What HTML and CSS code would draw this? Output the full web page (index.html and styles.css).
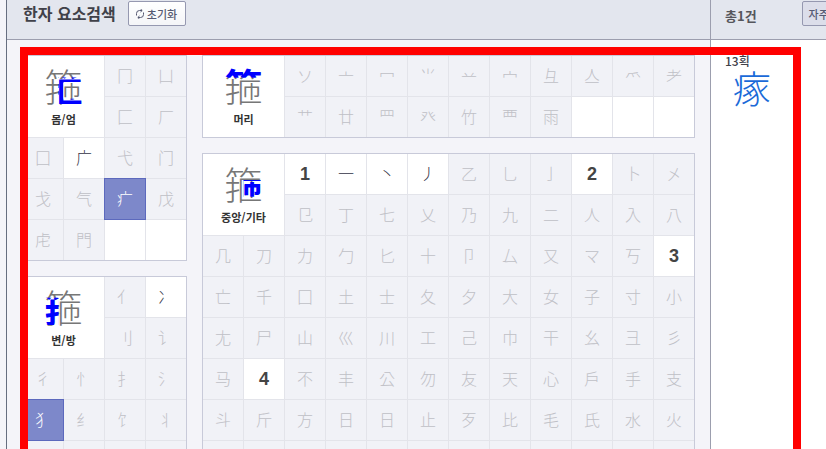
FILE: index.html
```html
<!DOCTYPE html>
<html lang="ko">
<head>
    <meta charset="UTF-8">
    <meta name="viewport" content="width=device-width, initial-scale=1.0">
    <title>한자 요소검색</title>
    <link rel="stylesheet" href="styles.css">
</head>
<body>

    <div class="app">
        <main class="search">
            <header class="bar">
                <h1>한자 요소검색</h1>
                <button class="btn" type="button">
                    <svg class="icon" viewBox="0 0 10 10" width="10" height="10" fill="none" stroke="currentColor">
                        <path d="M1.5 6.5V4.5A3 3 0 0 1 4.5 1.5H7M8.5 3.5V5.5A3 3 0 0 1 5.5 8.5H3"/>
                        <path d="M5.5 0L7.2 1.5L5.5 3M4.5 7L2.8 8.5L4.5 10"/>
                    </svg>
                    초기화
                </button>
            </header>

            <div class="boards">
                <div class="column">
                    <section class="grid narrow">
                        <div class="part"><span class="sample outer" data-char="箍">箍</span><strong>몸/엄</strong></div>
                        <button class="cell">冂</button>
                        <button class="cell">凵</button>
                        <button class="cell">匚</button>
                        <button class="cell">厂</button>
                        <button class="cell">囗</button>
                        <button class="cell on">广</button>
                        <button class="cell">弋</button>
                        <button class="cell">门</button>
                        <button class="cell">戈</button>
                        <button class="cell">气</button>
                        <button class="cell picked">疒</button>
                        <button class="cell">戊</button>
                        <button class="cell">虍</button>
                        <button class="cell">門</button>
                        <div class="blank"></div>
                        <div class="blank"></div>
                    </section>

                    <section class="grid narrow">
                        <div class="part"><span class="sample side" data-char="箍">箍</span><strong>변/방</strong></div>
                        <button class="cell">亻</button>
                        <button class="cell on">冫</button>
                        <button class="cell">刂</button>
                        <button class="cell">讠</button>
                        <button class="cell">彳</button>
                        <button class="cell">忄</button>
                        <button class="cell">扌</button>
                        <button class="cell">氵</button>
                        <button class="cell picked">犭</button>
                        <button class="cell">纟</button>
                        <button class="cell">饣</button>
                        <button class="cell">丬</button>
                        <div class="cell"></div>
                        <div class="cell"></div>
                        <div class="cell"></div>
                        <div class="cell"></div>
                    </section>
                </div>

                <div class="column">
                    <section class="grid wide">
                        <div class="part"><span class="sample top" data-char="箍">箍</span><strong>머리</strong></div>
                        <button class="cell">ソ</button>
                        <button class="cell">亠</button>
                        <button class="cell">冖</button>
                        <button class="cell">⺌</button>
                        <button class="cell">䒑</button>
                        <button class="cell">宀</button>
                        <button class="cell">彑</button>
                        <button class="cell">亼</button>
                        <button class="cell">爫</button>
                        <button class="cell">耂</button>
                        <button class="cell">⺾</button>
                        <button class="cell">廿</button>
                        <button class="cell">罒</button>
                        <button class="cell">癶</button>
                        <button class="cell">竹</button>
                        <button class="cell">覀</button>
                        <button class="cell">雨</button>
                        <div class="blank"></div>
                        <div class="blank"></div>
                        <div class="blank"></div>
                    </section>

                    <section class="grid wide">
                        <div class="part"><span class="sample center" data-char="箍">箍</span><strong>중앙/기타</strong></div>
                        <div class="count">1</div>
                        <button class="cell on">一</button>
                        <button class="cell on">丶</button>
                        <button class="cell on">丿</button>
                        <button class="cell">乙</button>
                        <button class="cell">乚</button>
                        <button class="cell">亅</button>
                        <div class="count">2</div>
                        <button class="cell">卜</button>
                        <button class="cell">㐅</button>

                        <button class="cell">㔾</button>
                        <button class="cell">丁</button>
                        <button class="cell">七</button>
                        <button class="cell">乂</button>
                        <button class="cell">乃</button>
                        <button class="cell">九</button>
                        <button class="cell">二</button>
                        <button class="cell">人</button>
                        <button class="cell">入</button>
                        <button class="cell">八</button>

                        <button class="cell">几</button>
                        <button class="cell">刀</button>
                        <button class="cell">力</button>
                        <button class="cell">勹</button>
                        <button class="cell">匕</button>
                        <button class="cell">十</button>
                        <button class="cell">卩</button>
                        <button class="cell">厶</button>
                        <button class="cell">又</button>
                        <button class="cell">マ</button>
                        <button class="cell">丂</button>
                        <div class="count">3</div>

                        <button class="cell">亡</button>
                        <button class="cell">千</button>
                        <button class="cell">囗</button>
                        <button class="cell">土</button>
                        <button class="cell">士</button>
                        <button class="cell">夂</button>
                        <button class="cell">夕</button>
                        <button class="cell">大</button>
                        <button class="cell">女</button>
                        <button class="cell">子</button>
                        <button class="cell">寸</button>
                        <button class="cell">小</button>

                        <button class="cell">尢</button>
                        <button class="cell">尸</button>
                        <button class="cell">山</button>
                        <button class="cell">巛</button>
                        <button class="cell">川</button>
                        <button class="cell">工</button>
                        <button class="cell">己</button>
                        <button class="cell">巾</button>
                        <button class="cell">干</button>
                        <button class="cell">幺</button>
                        <button class="cell">彐</button>
                        <button class="cell">彡</button>

                        <button class="cell">马</button>
                        <div class="count">4</div>
                        <button class="cell">不</button>
                        <button class="cell">丰</button>
                        <button class="cell">公</button>
                        <button class="cell">勿</button>
                        <button class="cell">友</button>
                        <button class="cell">天</button>
                        <button class="cell">心</button>
                        <button class="cell">戶</button>
                        <button class="cell">手</button>
                        <button class="cell">支</button>

                        <button class="cell">斗</button>
                        <button class="cell">斤</button>
                        <button class="cell">方</button>
                        <button class="cell">日</button>
                        <button class="cell">日</button>
                        <button class="cell">止</button>
                        <button class="cell">歹</button>
                        <button class="cell">比</button>
                        <button class="cell">毛</button>
                        <button class="cell">氏</button>
                        <button class="cell">水</button>
                        <button class="cell">火</button>

                        <div class="cell"></div>
                        <div class="cell"></div>
                        <div class="cell"></div>
                        <div class="cell"></div>
                        <div class="cell"></div>
                        <div class="cell"></div>
                        <div class="cell"></div>
                        <div class="cell"></div>
                        <div class="cell"></div>
                        <div class="cell"></div>
                        <div class="cell"></div>
                        <div class="cell"></div>
                    </section>
                </div>
            </div>
        </main>

        <aside class="results">
            <header class="bar">
                <h2>총1건</h2>
                <button class="btn often" type="button">자주</button>
            </header>
            <div class="result-list">
                <h3>13획</h3>
                <a class="hanja" href="#">瘃</a>
            </div>
        </aside>

        <div class="marker"></div>
    </div>

</body>
</html>
```

FILE: styles.css
```css
* {
    box-sizing: border-box;
}

body {
    margin: 0;
    background: #f4f4f9;
    color: #404149;
    font-family: "Noto Sans CJK KR", sans-serif;
    overflow: hidden;
}

.app {
    position: relative;
    display: flex;
    height: 100vh;
    margin-left: 6px;
    border-left: 1px solid #666e80;
    overflow: hidden;
}

.search {
    flex: none;
    border-right: 1px solid #9c9eae;
}

.results {
    flex: 1;
    min-width: 0;
    background: #fff;
    overflow: hidden;
}

.bar {
    display: flex;
    align-items: flex-start;
    height: 40px;
    padding: 1px 16px;
    background: #e3e6ee;
    border-bottom: 1px solid #9c9eae;
}

h1, h2, h3 {
    margin: 0;
    white-space: nowrap;
}

h1 {
    font-size: 16px;
    font-weight: 700;
    line-height: 25px;
    margin-right: 12px;
}

h2 {
    font-size: 13px;
    font-weight: 700;
    line-height: 30px;
    color: #55565c;
}

.btn {
    display: flex;
    align-items: center;
    gap: 2px;
    height: 25px;
    padding: 0 8px 0 6px;
    border: 1px solid #9598b0;
    border-radius: 2px;
    background: linear-gradient(#fff, #f4f5f8);
    color: #565972;
    font-family: inherit;
    font-size: 11px;
    font-weight: 500;
    line-height: 16px;
    white-space: nowrap;
    cursor: pointer;
}

.often {
    flex: none;
    margin-left: 45px;
    background: #dcdeea;
}

.results .bar {
    padding-left: 14px;
}

.boards {
    display: flex;
    gap: 15px;
    padding: 15px;
}

.column {
    display: flex;
    flex-direction: column;
    gap: 15px;
}

.grid {
    display: grid;
    grid-auto-rows: 40px;
    gap: 1px;
    background: #e3e4ea;
    border: 1px solid #c8cad9;
}

.narrow {
    grid-template-columns: repeat(4, 40px);
}

.wide {
    grid-template-columns: repeat(12, 40px);
}

.part {
    grid-column: span 2;
    grid-row: span 2;
    display: flex;
    flex-direction: column;
    align-items: center;
    padding-top: 10px;
    background: #fff;
}

.part strong {
    font-size: 11px;
    line-height: 18px;
    margin-top: 6px;
    color: #333;
}

.sample {
    position: relative;
    font-family: "Noto Sans CJK JP", sans-serif;
    font-size: 38px;
    font-weight: 300;
    line-height: 38px;
    color: #777;
}

/* the highlighted part is the same character, bold and cut to its region */
.sample::after {
    content: attr(data-char);
    position: absolute;
    top: 0;
    left: 0;
    color: #00f;
    font-weight: 700;
}

.outer::after {
    clip-path: polygon(36% 30%, 100% 30%, 100% 42%, 50% 42%, 50% 86%, 100% 86%, 100% 100%, 36% 100%);
}

.side::after {
    clip-path: inset(28% 62% 0 0);
}

.top::after {
    clip-path: inset(0 0 69% 0);
}

.center::after {
    clip-path: inset(42% 4% 14% 50%);
}

.cell {
    display: flex;
    align-items: center;
    justify-content: center;
    padding: 0 0 2px;
    border: 0;
    background: #f1f2f7;
    color: #bfc0c6;
    font-family: "Noto Sans CJK JP", "Noto Sans CJK SC", sans-serif;
    font-size: 16px;
    font-weight: 300;
    line-height: 24px;
    cursor: pointer;
}

.on {
    background: #fff;
    color: #333346;
}

.picked {
    background: #7d88ca;
    color: #fff;
    outline: 1px solid #5c69bd;
}

.blank {
    background: #fff;
}

.count {
    display: flex;
    align-items: center;
    justify-content: center;
    background: #fff;
    color: #444;
    font-family: "Liberation Sans", sans-serif;
    font-size: 18px;
    font-weight: 700;
}

.result-list {
    padding: 12px 14px;
}

h3 {
    font-size: 12px;
    font-weight: 500;
    line-height: 18px;
}

.hanja {
    display: block;
    margin-left: 8px;
    color: #1a6ad8;
    font-family: "Noto Sans CJK JP", sans-serif;
    font-size: 38px;
    font-weight: 300;
    line-height: 34px;
    text-decoration: none;
}

.marker {
    position: absolute;
    top: 47px;
    left: 13px;
    right: 25px;
    bottom: -8px;
    border: 8px solid #f00;
    pointer-events: none;
}
```
